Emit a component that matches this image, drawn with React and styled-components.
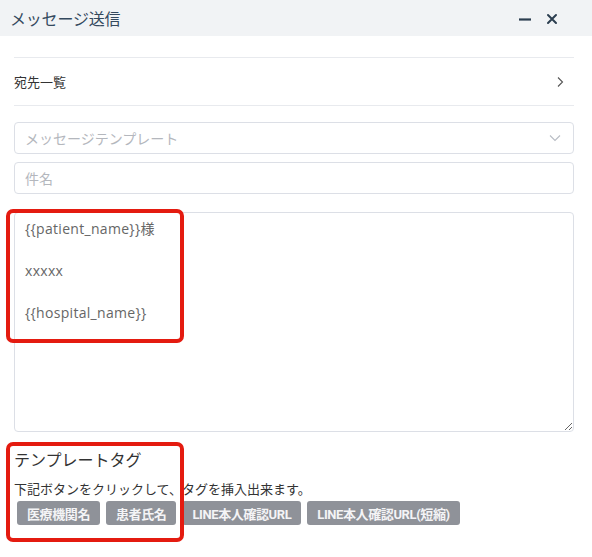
import React from "react";
import styled, { createGlobalStyle } from "styled-components";

const GlobalStyle = createGlobalStyle`
	* { box-sizing: border-box; }
	body {
		margin: 0;
		background: #fff;
		font-family: "Noto Sans CJK JP", "Noto Sans", sans-serif;
		color: #333;
	}
`;

const tags = ["医療機関名", "患者氏名", "LINE本人確認URL", "LINE本人確認URL(短縮)"];

const bodyText = "{{patient_name}}様\n\nxxxxx\n\n{{hospital_name}}";

export default function App() {
	return (
		<>
			<GlobalStyle />
			<Page>
				<Header>
					<HeaderTitle>メッセージ送信</HeaderTitle>
					<HeaderIcons>
						<svg width="14" height="14" viewBox="0 0 14 14">
							<path d="M1 7.5h12" stroke="#2c3e50" strokeWidth="2.2" />
						</svg>
						<svg width="12" height="12" viewBox="0 0 12 12">
							<path
								d="M2 2l8 8M10 2l-8 8"
								stroke="#2c3e50"
								strokeWidth="2"
								strokeLinecap="round"
							/>
						</svg>
					</HeaderIcons>
				</Header>
				<Content>
					<RecipientRow>
						<RowLabel>宛先一覧</RowLabel>
						<svg width="10" height="14" viewBox="0 0 10 14">
							<path d="M3 2.5l4.5 4.5L3 11.5" fill="none" stroke="#555" strokeWidth="1.1" />
						</svg>
					</RecipientRow>
					<Form>
						<SelectBox>
							<Placeholder>メッセージテンプレート</Placeholder>
							<svg width="14" height="10" viewBox="0 0 14 10">
								<path d="M2 2.5l5 5 5-5" fill="none" stroke="#b8bcc4" strokeWidth="1.1" />
							</svg>
						</SelectBox>
						<TextInput placeholder="件名" />
						<BodyArea defaultValue={bodyText} />
					</Form>
					<TagSection>
						<SectionTitle>テンプレートタグ</SectionTitle>
						<Hint>下記ボタンをクリックして、タグを挿入出来ます。</Hint>
						<TagRow>
							{tags.map((t) => (
								<TagButton key={t}>{t}</TagButton>
							))}
						</TagRow>
					</TagSection>
				</Content>
				<Mark $top={209} $height={134} />
				<Mark $top={442} $height={100} />
			</Page>
		</>
	);
}

const Page = styled.div`
	position: relative;
	width: 592px;
	height: 557px;
	overflow: hidden;
`;

// header
const Header = styled.div`
	display: flex;
	align-items: center;
	justify-content: space-between;
	height: 36px;
	padding: 0 34px 0 10px;
	background-color: #f1f3f5;
`;

const HeaderTitle = styled.span`
	font-size: 16px;
	color: #34495e;
	letter-spacing: -0.2px;
`;

const HeaderIcons = styled.div`
	display: flex;
	align-items: center;
	gap: 14px;
	margin-top: 2px;
`;

// content
const Content = styled.div`
	padding: 0 18px 0 14px;
`;

const RecipientRow = styled.div`
	display: flex;
	align-items: center;
	justify-content: space-between;
	height: 49px;
	margin-top: 21px;
	padding-right: 9px;
	border-top: 1px solid #e8eaee;
	border-bottom: 1px solid #e8eaee;
`;

const RowLabel = styled.span`
	font-size: 13px;
	color: #333;
`;

const Form = styled.div`
	display: flex;
	flex-direction: column;
	margin-top: 16px;
`;

const SelectBox = styled.div`
	display: flex;
	align-items: center;
	justify-content: space-between;
	height: 32px;
	padding: 0 11px 0 10px;
	border: 1px solid #dcdfe6;
	border-radius: 4px;
`;

const Placeholder = styled.span`
	font-size: 14px;
	color: #b4b7bd;
`;

const TextInput = styled.input`
	height: 32px;
	margin-top: 8px;
	padding: 0 10px;
	border: 1px solid #dcdfe6;
	border-radius: 4px;
	font-family: inherit;
	font-size: 14px;
	outline: none;
	&::placeholder {
		color: #b4b7bd;
	}
`;

const BodyArea = styled.textarea`
	height: 220px;
	margin-top: 18px;
	padding: 5px 10px;
	border: 1px solid #dcdfe6;
	border-radius: 4px;
	font-family: "Open Sans", "Noto Sans CJK JP", sans-serif;
	font-size: 14px;
	letter-spacing: 0.3px;
	line-height: 21px;
	color: #666;
	resize: vertical;
	outline: none;
`;

// tags
const TagSection = styled.div`
	margin-top: 15px;
`;

const SectionTitle = styled.div`
	font-size: 16px;
	color: #333;
	line-height: 24px;
`;

const Hint = styled.div`
	margin-top: 9px;
	font-size: 13px;
	line-height: 18px;
	color: #333;
`;

const TagRow = styled.div`
	display: flex;
	gap: 6px;
	margin-top: 3px;
	padding-left: 3px;
`;

const TagButton = styled.button`
	height: 24px;
	padding: 0 10px;
	border: none;
	border-radius: 3px;
	background-color: #8f9299;
	color: #f4f4f6;
	font-family: Roboto, "Noto Sans CJK JP", sans-serif;
	font-size: 13px;
	font-weight: 700;
	letter-spacing: -0.4px;
	cursor: pointer;
`;

// annotation overlay
const Mark = styled.div`
	position: absolute;
	left: 6px;
	top: ${(p) => p.$top}px;
	width: 178px;
	height: ${(p) => p.$height}px;
	border: 4px solid #e41b10;
	border-radius: 7px;
	pointer-events: none;
`;
